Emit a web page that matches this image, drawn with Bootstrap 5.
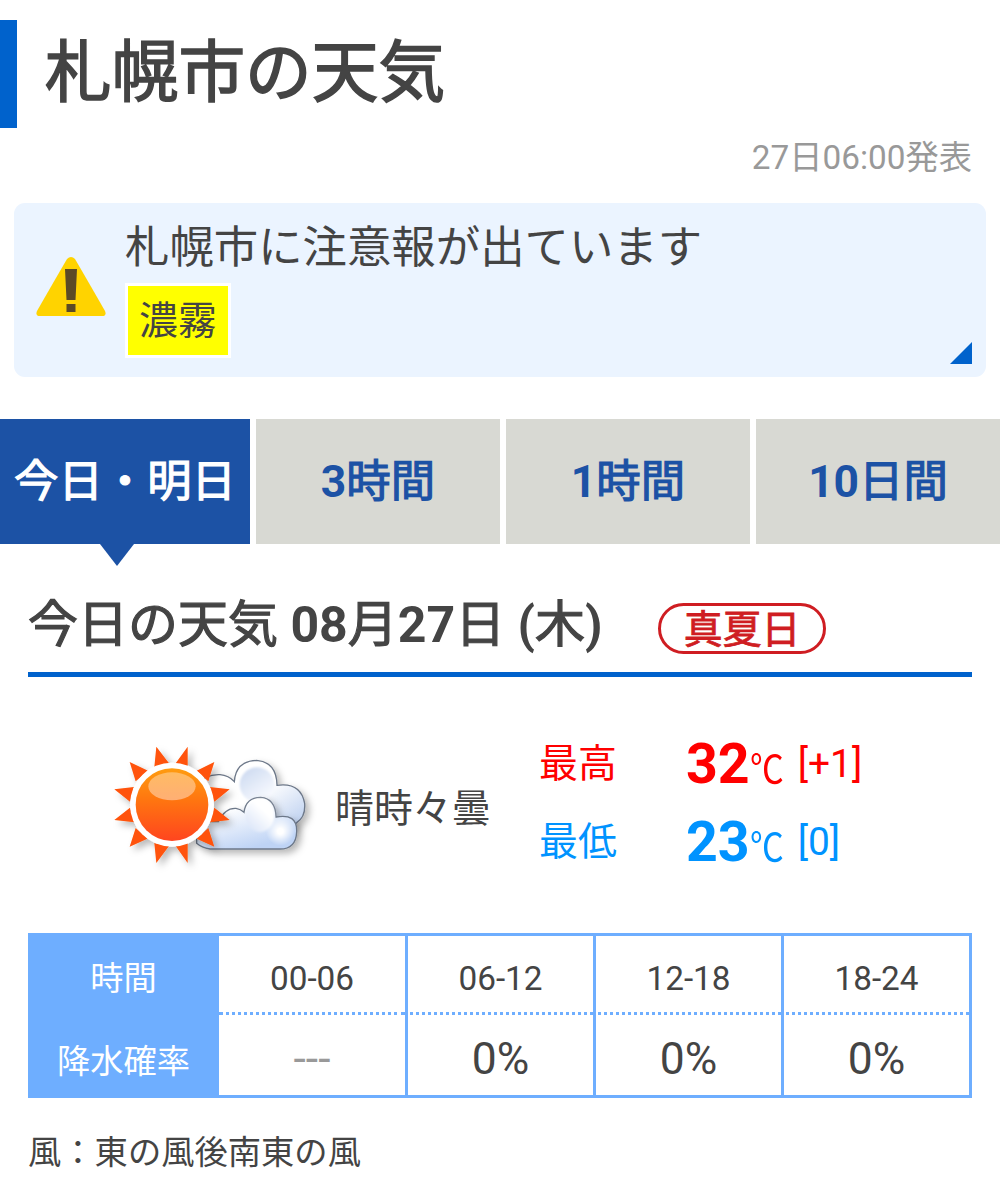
<!DOCTYPE html>
<html lang="ja">
<head>
<meta charset="utf-8">
<meta name="viewport" content="width=device-width, initial-scale=1">
<title>札幌市の天気</title>
<link rel="stylesheet" href="https://cdn.jsdelivr.net/npm/bootstrap@5.3.0/dist/css/bootstrap.min.css">
<style>
body{font-family:Roboto,"Noto Sans CJK JP",sans-serif;color:#444;background:#fff;font-size:33.3px;line-height:1;overflow:hidden}
.kj{font-weight:400;-webkit-text-stroke:1.2px currentColor}
.city-title{height:108px;margin-top:20px;border-left:17px solid #0062cc;padding:0 0 1px 28px;font-size:66.7px;line-height:1}
.city-title .kj{-webkit-text-stroke-width:1.6px}
.issued{height:75px;padding:12px 28px 0 0;line-height:36px;color:#999}
.warn-box{height:174px;margin:0 14px;border-radius:11px;background:#ebf4ff;padding:17px 0 0 22px;gap:19px}
.warn-icon{margin-top:37px;flex:none}
.warn-title{font-size:44.4px;line-height:52px;padding-top:2px}
.fog-tag{font-size:38.9px;width:106px;height:75px;margin-top:9px;border:3px solid #fff;background:#ff0;padding-top:2px}
.warn-corner{right:14px;bottom:13px}
.day-tabs{height:125px;margin-top:42px;font-size:44.4px;font-weight:700}
.day-tabs a{color:#1c52a5;background:#d8d9d3;border-left:6px solid #fff;border-radius:0;padding:1px 0 0}
.day-tabs a.now{color:#fff;background:#1c52a5;border-left:0}
.day-tabs a.now::after{content:"";position:absolute;left:100px;top:100%;border:solid transparent;border-width:22px 17px 0;border-top-color:#1c52a5}
.today-head{margin:51px 28px 0;height:82px;border-bottom:5px solid #0062cc;font-size:50px;font-weight:700;line-height:61px;padding-bottom:0}
.hot-pill{width:168px;height:51px;margin:8px 0 0 55.5px;border:3px solid #cf1d22;border-radius:26px;color:#cf1d22;font-size:38.9px;line-height:1;padding-top:3px}
.hot-pill .kj{-webkit-text-stroke-width:.8px}
.now-row{height:256px;padding-left:100px}
.sky{width:190px;margin-left:15px;font-size:38.9px;padding-top:8px}
.temps{margin:17px 0 0 14px;font-size:38.9px}
.temp-line{height:78px;line-height:58px}
.temp-name{width:147px;padding-bottom:6px}
.temp-name,.temp-diff{transform:translateY(-6px)}
.temp-num{font-size:55.5px;font-weight:700}
.temp-unit{display:inline-block;width:48px;white-space:nowrap;transform:scaleX(.87);transform-origin:0 50%}
.t-max{color:#f00}.t-min{color:#0093ff}
.rain{width:944px;margin:0 28px;height:165px;border:3px solid #6eaeff;table-layout:fixed;border-collapse:separate;border-spacing:0;text-align:center}
.rain th{width:188px;background:#6eaeff;color:#fff;font-weight:400;padding:6px 3px 0 0}
.rain td{padding:9px 0 0;border-left:3px solid #6eaeff}
.rain .first{border-left:0;width:186px}
.rain .hrs td{height:79px;border-bottom:3px dotted #6eaeff}
.rain .pct th{padding-top:13px}
.rain .pct td{font-size:44.4px;padding-top:8px}
.rain .pct td.none{color:#999}
.wind{margin:35px 28px 0;line-height:40px}
</style>
</head>
<body>
<h1 class="city-title d-flex align-items-center mb-0"><span class="kj">札幌市の天気</span></h1>
<div class="issued text-end">27日06:00発表</div>

<section class="warn-box d-flex position-relative">
  <svg class="warn-icon" width="70" height="60" viewBox="0 0 70 60"><path d="M31 2Q35-2 39 2Q53 26 69 54Q71 59 66 59H4Q-1 59 1 54Q17 26 31 2Z" fill="#ffd300"/><path d="M29 12H41L39.500 43H30.500ZM30.500 47H39.500V55H30.500Z" fill="#5b4a26"/></svg>
  <div>
    <div class="warn-title">札幌市に注意報が出ています</div>
    <div class="fog-tag d-flex align-items-center justify-content-center">濃霧</div>
  </div>
  <svg class="warn-corner position-absolute" width="22" height="22" viewBox="0 0 22 22"><path d="M22 0V22H0Z" fill="#0062cc"/></svg>
</section>

<nav class="day-tabs nav nav-pills nav-fill flex-nowrap">
  <a class="now w-25 position-relative d-flex align-items-center justify-content-center text-decoration-none" href="#"><span class="kj">今日・明日</span></a>
  <a class="w-25 d-flex align-items-center justify-content-center text-decoration-none" href="#">3<span class="kj">時間</span></a>
  <a class="w-25 d-flex align-items-center justify-content-center text-decoration-none" href="#">1<span class="kj">時間</span></a>
  <a class="w-25 d-flex align-items-center justify-content-center text-decoration-none" href="#">10<span class="kj">日間</span></a>
</nav>

<h2 class="today-head d-flex align-items-start mb-0">
  <span class="text-nowrap"><span class="kj">今日の天気</span> 08<span class="kj">月</span>27<span class="kj">日</span> (<span class="kj">木</span>)</span>
  <span class="hot-pill d-flex align-items-center justify-content-center"><span class="kj">真夏日</span></span>
</h2>

<section class="now-row d-flex align-items-center">
  <svg width="220" height="150" viewBox="0 0 660 450">
    <defs>
      <linearGradient id="sunFill" x1="0" y1="0" x2="0" y2="1"><stop offset="0" stop-color="#ff9c10"/><stop offset=".45" stop-color="#ff7410"/><stop offset="1" stop-color="#ff451f"/></linearGradient>
      <linearGradient id="gloss" x1="0" y1="0" x2="0" y2="1"><stop offset="0" stop-color="#fff" stop-opacity=".35"/><stop offset="1" stop-color="#fff" stop-opacity=".42"/></linearGradient>
      <linearGradient id="cloudBack" x1="0" y1="0" x2="1" y2="1"><stop offset=".5" stop-color="#fff"/><stop offset="1" stop-color="#adc5ec"/></linearGradient>
      <linearGradient id="cloudFront" x1="0" y1="0" x2=".5" y2="1"><stop offset=".3" stop-color="#fff"/><stop offset="1" stop-color="#bed3f5"/></linearGradient>
      <linearGradient id="puff" x1="0" y1="0" x2=".7" y2="1"><stop offset="0" stop-color="#c9d7ef"/><stop offset=".9" stop-color="#f5f8fe"/></linearGradient>
      <linearGradient id="puffLow" x1="0" y1="1" x2=".8" y2="0"><stop offset="0" stop-color="#d5e1f7"/><stop offset=".7" stop-color="#fff"/></linearGradient>
      <radialGradient id="puffGlow"><stop offset=".2" stop-color="#fff"/><stop offset="1" stop-color="#fff" stop-opacity="0"/></radialGradient>
      <filter id="shade" x="-20%" y="-20%" width="150%" height="150%"><feDropShadow dx="12" dy="12" stdDeviation="11" flood-color="#000" flood-opacity=".28"/></filter>
      <filter id="soft"><feGaussianBlur stdDeviation="3"/></filter>
    </defs>
    <g filter="url(#shade)" stroke="#6d7889" stroke-width="4">
      <path d="M290 300V165Q315 132 360 134Q386 136 403 155Q407 93 470 91Q530 96 531 166Q602 156 614 220Q617 261 590 278L560 320H290Z" fill="url(#cloudBack)"/>
    </g>
    <circle cx="471" cy="164" r="52" fill="url(#puff)" filter="url(#soft)"/>
    <g filter="url(#shade)"><path d="M290 340V275H355Q375 233 408 235Q422 237 432 247Q438 202 482 202Q526 205 528 261Q592 249 590 305Q588 357 540 357H330Q305 353 290 340Z" fill="url(#cloudFront)" stroke="#6d7889" stroke-width="4"/></g>
    <ellipse cx="480" cy="256" rx="43" ry="50" fill="url(#puffLow)" filter="url(#soft)"/>
    <circle cx="541" cy="304" r="43" fill="url(#puffGlow)"/>
    <g filter="url(#shade)">
      <path d="M169 50L207 100L163 111ZM263 50V111L227 100ZM343 96L325 154L290 122ZM389 178L343 215L329 171ZM389 270L329 277L343 233ZM343 350L290 326L325 294ZM263 399L227 348L263 337ZM169 399L163 339L207 348ZM89 350L107 294L142 326ZM43 270L90 233L104 277ZM43 178L102 171L90 215ZM89 96L144 122L107 154Z" fill="#ff5208"/>
      <circle cx="216" cy="224" r="126" fill="#fff"/>
    </g>
    <circle cx="216" cy="224" r="109" fill="url(#sunFill)"/>
    <ellipse cx="216" cy="169" rx="71" ry="42" fill="url(#gloss)"/>
  </svg>
  <div class="sky text-nowrap">晴時々曇</div>
  <div class="temps">
    <div class="temp-line t-max d-flex align-items-baseline"><span class="temp-name">最高</span><span class="temp-num">32</span><span class="temp-unit">℃</span><span class="temp-diff">[+1]</span></div>
    <div class="temp-line t-min d-flex align-items-baseline"><span class="temp-name">最低</span><span class="temp-num">23</span><span class="temp-unit">℃</span><span class="temp-diff">[0]</span></div>
  </div>
</section>

<table class="rain">
  <tbody>
    <tr class="hrs"><th scope="row">時間</th><td class="first">00-06</td><td>06-12</td><td>12-18</td><td>18-24</td></tr>
    <tr class="pct"><th scope="row">降水確率</th><td class="first none">---</td><td>0%</td><td>0%</td><td>0%</td></tr>
  </tbody>
</table>
<p class="wind mb-0">風：東の風後南東の風</p>
<script src="https://cdn.jsdelivr.net/npm/bootstrap@5.3.0/dist/js/bootstrap.bundle.min.js"></script>
</body>
</html>
